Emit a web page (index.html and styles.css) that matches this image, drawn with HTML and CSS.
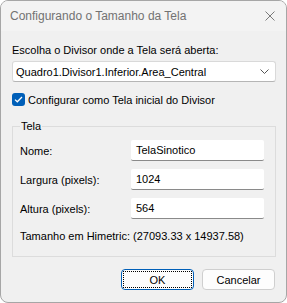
FILE: index.html
```html
<!DOCTYPE html>
<html lang="pt">
<head>
  <meta charset="UTF-8" />
  <title>Configurando o Tamanho da Tela</title>
  <link rel="stylesheet" href="styles.css">
</head>
<body>

<div class="window">
  <div class="titlebar">
    <span class="title">Configurando o Tamanho da Tela</span>
    <svg class="close" width="10" height="10" viewBox="0 0 10 10">
      <path d="M0.5 0.5 L9.5 9.5 M9.5 0.5 L0.5 9.5" stroke="#7a7a7a" stroke-width="1" fill="none" />
    </svg>
  </div>

  <div class="content">
    <div class="label-top">Escolha o Divisor onde a Tela será aberta:</div>
    <div class="combo">
      <span>Quadro1.Divisor1.Inferior.Area_Central</span>
      <svg width="9" height="5" viewBox="0 0 9 5">
        <path d="M0.5 0.5 L4.5 4.5 L8.5 0.5" stroke="#555" stroke-width="1" fill="none" />
      </svg>
    </div>

    <label class="check">
      <span class="box">
        <svg width="9" height="7" viewBox="0 0 9 7">
          <path d="M1 3.6 L3.3 5.8 L8 1" stroke="#fff" stroke-width="1.3" fill="none" />
        </svg>
      </span>
      Configurar como Tela inicial do Divisor
    </label>

    <fieldset class="group">
      <legend>Tela</legend>
      <div class="rows">
        <label>Nome:</label>
        <div class="field">TelaSinotico</div>
        <label>Largura (pixels):</label>
        <div class="field">1024</div>
        <label>Altura (pixels):</label>
        <div class="field">564</div>
      </div>
      <div class="himetric">Tamanho em Himetric: (27093.33 x 14937.58)</div>
    </fieldset>

    <div class="buttons">
      <button class="btn default"><span>OK</span></button>
      <button class="btn">Cancelar</button>
    </div>
  </div>
</div>

</body>
</html>
```

FILE: styles.css
```css
/* Page */
body {
  margin: 0;
  background: #ffffff;
  font-family: "Liberation Sans", Arial, sans-serif;
  font-size: 11px;
  color: #000;
}

/* Dialog window */
.window {
  width: 287px;
  height: 303px;
  box-sizing: border-box;
  border: 1px solid #a6a6a6;
  border-radius: 8px;
  background: #f0f0f0;
  overflow: hidden;
}

.titlebar {
  height: 30px;
  background: #f3f3f3;
  display: flex;
  align-items: center;
  justify-content: space-between;
  padding: 0 10px 0 9px;
}

.title {
  color: #727272;
  font-size: 12px;
}

.close {
  margin-right: 1px;
}

.content {
  padding: 12px 10px 0 11px;
}

.label-top {
  line-height: 15px;
}

/* Combo box */
.combo {
  margin-top: 3px;
  height: 21px;
  box-sizing: border-box;
  background: #fff;
  border: 1px solid #d9d9d9;
  border-bottom-color: #b5b5b5;
  border-radius: 3px;
  display: flex;
  align-items: center;
  justify-content: space-between;
  padding: 0 6px 0 3px;
}

/* Checkbox */
.check {
  display: flex;
  align-items: center;
  gap: 3px;
  margin-top: 11px;
  height: 13px;
}

.box {
  width: 13px;
  height: 13px;
  border-radius: 3px;
  background: #005fb8;
  display: flex;
  align-items: center;
  justify-content: center;
}

/* Group box */
.group {
  margin: 13px 0 0;
  padding: 7px 11px 9px 7px;
  border: 1px solid #dcdcdc;
  height: 138px;
  box-sizing: border-box;
}

.group legend {
  padding: 0 1px;
  line-height: 14px;
}

.rows {
  display: grid;
  grid-template-columns: 111px 133px;
  row-gap: 8px;
  align-items: center;
}

.field {
  height: 21px;
  box-sizing: border-box;
  background: #fff;
  border-bottom: 1px solid #8a8a8a;
  border-radius: 2px;
  padding: 0 5px;
  display: flex;
  align-items: center;
}

.himetric {
  margin-top: 11px;
}

/* Buttons */
.buttons {
  display: flex;
  justify-content: flex-end;
  gap: 8px;
  margin-top: 12px;
  padding-right: 1px;
}

.btn {
  width: 73px;
  height: 21px;
  font-family: inherit;
  font-size: 11px;
  color: #000;
  background: #fdfdfd;
  border: 1px solid #cfcfcf;
  border-radius: 4px;
  padding: 0;
}

.btn.default {
  border-color: #005fb8;
  padding: 1px;
}

.btn.default span {
  display: flex;
  align-items: center;
  justify-content: center;
  height: 100%;
  box-sizing: border-box;
  border: 1px dotted #000;
}
```
